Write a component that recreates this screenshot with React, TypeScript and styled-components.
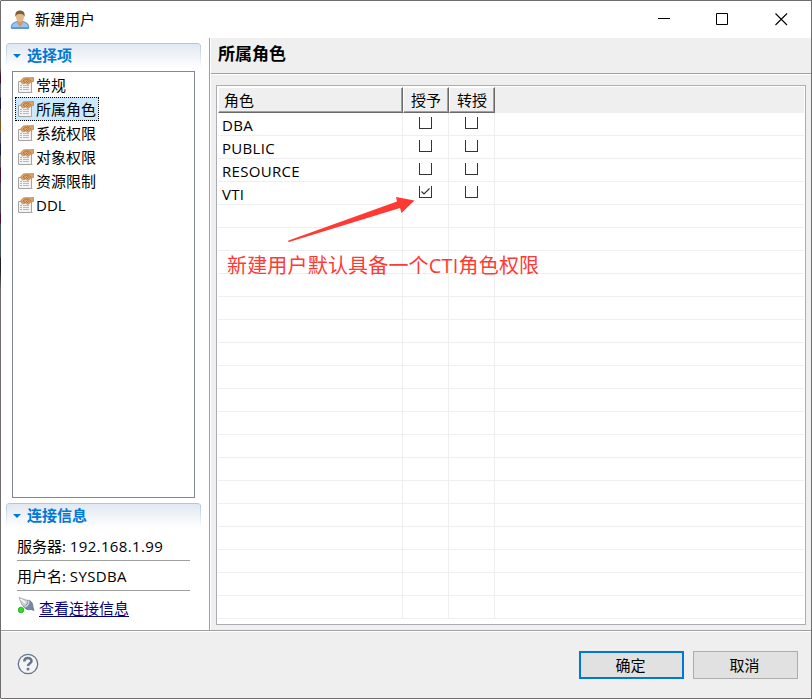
import React from "react";
import styled, { createGlobalStyle, css } from "styled-components";

const Global = createGlobalStyle`
  * { box-sizing: border-box; }
  html, body { margin: 0; padding: 0; background: #fff; }
  body { font: 15px/20px "Open Sans", "Noto Sans CJK SC", sans-serif; color: #000; overflow: hidden; }
`;

const Window = styled.div`
  position: relative;
  width: 812px;
  height: 699px;
  display: flex;
  flex-direction: column;
  border: 1px solid #6f6d6e;
  border-left-color: transparent;
  background:
    linear-gradient(#efefef, #efefef) padding-box,
    linear-gradient(#6f6d6e 0 68px, #3c1028 76px 83px, #556 84px 97px, #141440 98px 109px, #555 110px 120px,
      #80551f 121px 132px, #445 133px 143px, #181840 144px 155px, #555 156px 167px, #4a1230 168px 182px,
      #445 183px 213px, #4a1230 214px 223px, #45525a 224px 257px, #222 258px 271px, #6f6d6e 290px) border-box;
  overflow: hidden;
`;

const TitleBar = styled.header`
  height: 37px;
  flex: none;
  display: flex;
  align-items: center;
  padding-left: 9px;
  background: #fff;
`;

const Title = styled.span`
  margin: -2px 0 0 5px;
  flex: 1;
  line-height: 22px;
`;

const WindowControls = styled.div`
  display: flex;
  gap: 46px;
  padding-right: 23px;
  svg { display: block; }
  svg:last-child { margin-left: 1px; }
`;

const Body = styled.main`
  display: flex;
  height: 592px;
  flex: none;
`;

const Sidebar = styled.aside`
  width: 209px;
  flex: none;
  background: #fff;
  border-right: 1px solid #a0a0a0;
  padding: 5px 8px 0 5px;
`;

const SectionHeader = styled.div`
  height: 25px;
  width: 195px;
  display: flex;
  align-items: center;
  gap: 6px;
  padding: 0 0 2px 7px;
  border-top: 1px solid #b4c6da;
  border-radius: 4px 4px 0 0;
  background:
    linear-gradient(#b4c6da, #fff) left / 1px 100% no-repeat,
    linear-gradient(#b4c6da, #fff) right / 1px 100% no-repeat,
    linear-gradient(#e1e8f2, #fff);
  color: #0078d7;
  font-weight: 700;
  svg { margin-top: 2px; }
`;

const OptionList = styled.ul`
  list-style: none;
  width: 183px;
  height: 427px;
  margin: 3px 0 5px 6px;
  padding: 1px 2px;
  border: 1px solid #828790;
`;

const Option = styled.li<{ $selected?: boolean }>`
  display: flex;
  align-items: center;
  width: max-content;
  height: 24px;
  padding: 0 3px 0 3px;
  gap: 2px;
  line-height: 22px;
  ${(p) => p.$selected && css`
    background: #cce8ff;
    outline: 1px dotted #000;
    outline-offset: -1px;
  `}
`;

const ConnectionInfo = styled.div`
  width: 173px;
  margin-left: 11px;
  padding-top: 3px;
`;

const InfoRow = styled.div`
  height: 30px;
  padding-top: 4px;
  border-bottom: 1px solid #a0a0a0;
  line-height: 22px;
  white-space: nowrap;
`;

const InfoValue = styled.span`
  letter-spacing: 0.35px;
`;

const ConnectionLink = styled.a`
  display: flex;
  gap: 4px;
  padding: 6px 0 0 1px;
  color: #000080;
  line-height: 22px;
  svg { flex: none; }
  span { text-decoration: underline; text-underline-offset: 2px; }
`;

const Content = styled.section`
  flex: 1;
  border-left: 1px solid #fff;
  display: flex;
  flex-direction: column;
`;

const Heading = styled.h1`
  height: 37px;
  margin: 0;
  padding: 4px 0 0 7px;
  font-size: 17px;
  line-height: 23px;
  font-weight: 700;
  border-bottom: 1px solid #fff;
  box-shadow: inset 0 -1px #a0a0a0;
`;

const Grid = styled.div`
  width: 590px;
  height: 540px;
  margin: 10px 0 0 5px;
  padding: 1px;
  border: 1px solid #abadb3;
  background: #fff;
`;

const GridRow = styled.div`
  display: grid;
  grid-template-columns: 185px 46px 46px 1fr;
  height: 23px;
  border-bottom: 1px solid #efefef;
`;

const HeaderRow = styled(GridRow)`
  height: 26px;
  border: 0;
  background: #efefef;
`;

const HeaderCell = styled.div<{ $center?: boolean }>`
  padding: 1px 0 0 ${(p) => (p.$center ? "0" : "5px")};
  text-align: ${(p) => (p.$center ? "center" : "left")};
  line-height: 22px;
  border: solid;
  border-width: 1px;
  border-color: #fff #696969 #696969 #fff;
  box-shadow: inset -1px -1px #a0a0a0;
`;

const Cell = styled.div`
  display: flex;
  justify-content: center;
  border-right: 1px solid #efefef;
`;

const NameCell = styled(Cell)`
  justify-content: flex-start;
  padding-left: 4px;
  line-height: 25px;
  letter-spacing: 0.3px;
`;

const Box = styled.span`
  width: 13px;
  height: 12px;
  margin-top: 4px;
  border: solid #333;
  border-width: 0 1px 1px;
  svg { display: block; }
`;

const Footer = styled.footer`
  flex: 1;
  display: flex;
  align-items: flex-start;
  gap: 9px;
  padding: 20px 13px 0 16px;
  border-top: 1px solid #a0a0a0;
  box-shadow: inset 0 1px #fff;
`;

const Help = styled.div`
  flex: 1;
  padding-top: 2px;
`;

const Button = styled.button<{ $primary?: boolean }>`
  width: 105px;
  height: 28px;
  padding: 0 2px 0 0;
  border: ${(p) => (p.$primary ? "2px solid #0078d7" : "1px solid #adadad")};
  background: #e1e1e1;
  color: #000;
  font: inherit;
`;

const Arrow = styled.svg`
  position: absolute;
  left: 287px;
  top: 194px;
`;

const Note = styled.div`
  position: absolute;
  left: 226px;
  top: 251px;
  color: #ff3a35;
  font-size: 20px;
  line-height: 28px;
  letter-spacing: 0.18px;
  white-space: nowrap;
`;

const UserIcon = () => (
  <svg width="20" height="20" viewBox="0 0 20 20">
    <path d="M1 19C0 14 3 12.500 7 11h6c4 1.500 7 3 6 8z" fill="#5f98d2" />
    <path d="M2 17c0-3 3-4 5-5l3 4 3-4c2 1 5 2 5 5z" fill="#9cc4ec" />
    <path d="M7 10h6v3l-3 4-3-4z" fill="#d09a6b" />
    <ellipse cx="10" cy="6.500" rx="4" ry="5.500" fill="#e3b788" />
    <path d="M5.500 7C4.500 2.500 7 .5 10 .5s5.500 2 4.500 6.500C13.500 4 12 4 10 4S6.500 4 5.500 7z" fill="#7c6040" />
  </svg>
);

const PropertyIcon = () => (
  <svg width="16" height="16" viewBox="0 0 16 16">
    <path d="M1 15.500h14" stroke="#ddd" />
    <path d="M.5 4.500h13v11H.5z" fill="#f3f3f3" stroke="#a4a4a4" />
    <path d="M2.500 8.500h1M2.500 12.500h1" stroke="#4675c0" />
    <path d="M2.500 10.500h1" stroke="#4ba24b" />
    <path d="M5 8.500h6M5 10.500h6M5 12.500h6" stroke="#bcbcbc" />
    <path d="M2.500 4 5.500.8h5L15.500.5V4.500l-2.500.5-3 2.500L7.500 6l-3 1z" fill="#dda469" stroke="#b67b43" strokeWidth=".7" />
    <path d="m5 4 3-2 3.500 3M7 6 5.500 4M9 1l4 3M8 4l2 2" stroke="#98632f" strokeWidth=".7" fill="none" />
  </svg>
);

const PlugIcon = () => (
  <svg width="17" height="17" viewBox="0 0 17 17">
    <path d="M1 .5 7 2.500 11 4l-4 6-3-2z" fill="#cdd2d6" stroke="#9299a0" strokeWidth=".7" />
    <path d="m2.500 2 5 4" stroke="#fff" strokeWidth="1.200" />
    <path d="M10 3c4 1 5 4 5 7l1 3.500-3-1c-3 1-6-.5-7.500-3C9 9 10.500 6 10 3z" fill="#7788a5" stroke="#536078" strokeWidth=".6" />
    <path d="M10.500 3.500c1 3-1 6-4 6.500" fill="none" stroke="#d6dbe2" strokeWidth="1.300" />
    <circle cx="3" cy="13" r="2.800" fill="#2be01f" stroke="#139b19" strokeWidth=".7" />
  </svg>
);

const Triangle = () => (
  <svg width="8" height="4" viewBox="0 0 8 4"><path d="M0 0h8L4 4z" fill="#0078d7" /></svg>
);

const options = ["常规", "所属角色", "系统权限", "对象权限", "资源限制", "DDL"];
const roles = ["DBA", "PUBLIC", "RESOURCE", "VTI"];

const Check = ({ checked }: { checked?: boolean }) => (
  <Box>
    {checked && (
      <svg width="11" height="11" viewBox="0 0 11 11"><path d="m1.500 5.500 2.500 2.500 5.500-5.500" fill="none" stroke="#333" strokeWidth="1.200" /></svg>
    )}
  </Box>
);

export default function App() {
  return (
    <>
      <Global />
      <Window>
        <TitleBar>
          <UserIcon />
          <Title>新建用户</Title>
          <WindowControls>
            <svg width="12" height="13" viewBox="0 0 12 13"><path d="M0 5.500h12" stroke="#000" /></svg>
            <svg width="12" height="13" viewBox="0 0 12 13"><path d="M.5.5h11v11H.5z" fill="none" stroke="#000" /></svg>
            <svg width="13" height="13" viewBox="0 0 13 13"><path d="m.5.5 11.500 11.500M12 .5.5 12" stroke="#000" strokeWidth="1.100" /></svg>
          </WindowControls>
        </TitleBar>
        <Body>
          <Sidebar>
            <SectionHeader><Triangle />选择项</SectionHeader>
            <OptionList>
              {options.map((name, i) => (
                <Option key={name} $selected={i === 1}><PropertyIcon />{name}</Option>
              ))}
            </OptionList>
            <SectionHeader><Triangle />连接信息</SectionHeader>
            <ConnectionInfo>
              <InfoRow>服务器: <InfoValue>192.168.1.99</InfoValue></InfoRow>
              <InfoRow>用户名: <InfoValue>SYSDBA</InfoValue></InfoRow>
              <ConnectionLink><PlugIcon /><span>查看连接信息</span></ConnectionLink>
            </ConnectionInfo>
          </Sidebar>
          <Content>
            <Heading>所属角色</Heading>
            <Grid>
              <HeaderRow>
                <HeaderCell>角色</HeaderCell>
                <HeaderCell $center>授予</HeaderCell>
                <HeaderCell $center>转授</HeaderCell>
              </HeaderRow>
              {Array.from({ length: 22 }, (_, i) => (
                <GridRow key={i}>
                  <NameCell>{roles[i]}</NameCell>
                  <Cell>{i < 4 && <Check checked={i === 3} />}</Cell>
                  <Cell>{i < 4 && <Check />}</Cell>
                </GridRow>
              ))}
            </Grid>
          </Content>
        </Body>
        <Footer>
          <Help>
            <svg width="22" height="22" viewBox="0 0 22 22">
              <circle cx="11" cy="11" r="9.700" fill="#f4f4f4" stroke="#66758e" strokeWidth="1.300" />
              <path d="M7.300 8.500c0-4.500 7.200-4.500 7.200-.5 0 2.500-3.500 2.500-3.500 5" fill="none" stroke="#66758e" strokeWidth="2.600" />
              <path d="M9.700 14.800h2.600v2.600H9.700z" fill="#66758e" />
            </svg>
          </Help>
          <Button $primary>确定</Button>
          <Button>取消</Button>
        </Footer>
        <Arrow width="130" height="50" viewBox="288 195 130 50">
          <path d="M288 241.500 288.500 240.500 397 201.500l-1-4.500 18.500 3.500L401.500 213l-1.500-5L289 242z" fill="#ff3a35" />
        </Arrow>
        <Note>新建用户默认具备一个CTI角色权限</Note>
      </Window>
    </>
  );
}
